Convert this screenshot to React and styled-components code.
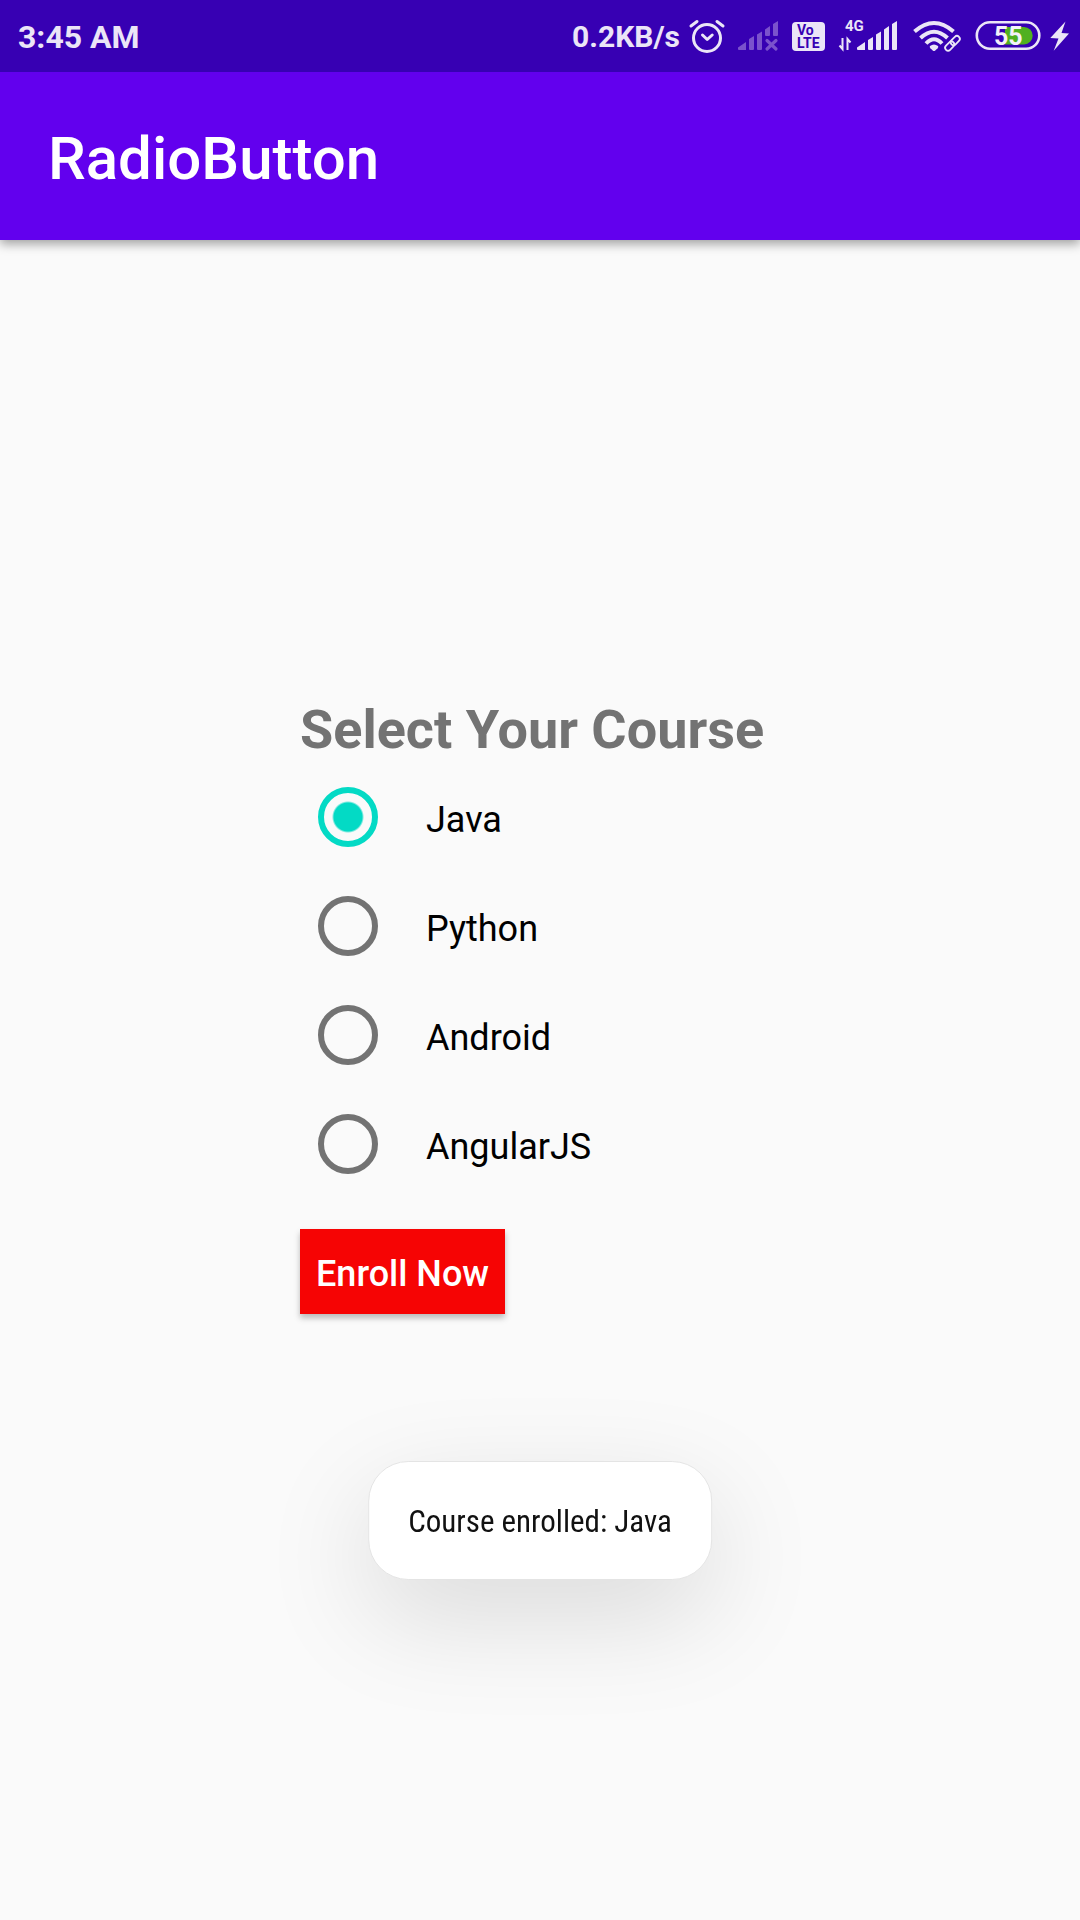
import React, { useState } from "react";
import styled, { createGlobalStyle } from "styled-components";

const GlobalStyle = createGlobalStyle`
  * { box-sizing: border-box; }
  body {
    margin: 0;
    background: #fafafa;
    font-family: Roboto, "Liberation Sans", sans-serif;
  }
`;

const Screen = styled.div`
  min-height: 100vh;
  display: flex;
  flex-direction: column;
`;

const StatusBar = styled.div`
  position: relative;
  z-index: 1;
  display: flex;
  align-items: center;
  justify-content: space-between;
  height: 72px;
  padding: 0 8px 0 18px;
  background: #3700b3;
  color: #ebe5f7;
`;

const Clock = styled.time`
  padding-top: 2px;
  font-size: 32px;
  line-height: 40px;
  font-weight: 700;
`;

const StatusItems = styled.div`
  display: flex;
  align-items: center;
`;

const Speed = styled.span`
  padding-top: 2px;
  font-size: 30px;
  line-height: 40px;
  font-weight: 700;
`;

const StatusIcons = styled.svg`
  display: block;
  width: 392px;
  height: 72px;
`;

const IconText = styled.text`
  fill: ${(p) => p.$color};
  font-size: ${(p) => p.$size}px;
  font-weight: 700;
`;

const AppBar = styled.header`
  display: flex;
  align-items: center;
  height: 168px;
  padding: 6px 48px 0;
  background: #6200ee;
  box-shadow: 0 4px 10px rgba(0, 0, 0, 0.36);
`;

const Title = styled.h1`
  margin: 0;
  color: #fff;
  font-size: 60px;
  line-height: 72px;
  font-weight: 500;
`;

const Main = styled.main`
  flex: 1;
  padding: 458px 24px 48px;
`;

const Form = styled.form`
  max-width: 480px;
  margin: 0 auto;
`;

const Group = styled.fieldset`
  margin: 0;
  padding: 0;
  border: 0;
`;

const Legend = styled.legend`
  padding: 0;
  color: #737373;
  font-size: 54px;
  line-height: 64px;
  font-weight: 700;
`;

const Option = styled.label`
  display: flex;
  align-items: center;
  gap: 48px;
  height: 109px;
  padding-left: 18px;
`;

const Radio = styled.input`
  appearance: none;
  flex: none;
  width: 60px;
  height: 60px;
  margin: 0;
  border: 6px solid #737373;
  border-radius: 50%;

  &:checked {
    border-color: #03dac5;
    background: radial-gradient(circle, #03dac5 14px, transparent 16px);
  }
`;

const OptionText = styled.span`
  padding-top: 6px;
  color: #000;
  font-size: 36px;
  line-height: 42px;
`;

const EnrollButton = styled.button`
  display: block;
  margin: 31px 0 0;
  padding: 24px 16px 19px;
  border: 0;
  background: #f60404;
  color: #fff;
  font-family: inherit;
  font-size: 36px;
  line-height: 42px;
  font-weight: 500;
  box-shadow: 0 4px 6px rgba(0, 0, 0, 0.26);
`;

const Toast = styled.div`
  position: fixed;
  bottom: 340px;
  left: 50%;
  transform: translateX(-50%);
  padding: 41px 39px 38px;
  border: 1px solid #e4e4e4;
  border-radius: 40px;
  background: #fff;
  color: #111;
  font-family: "Roboto Condensed", Roboto, sans-serif;
  font-size: 31px;
  line-height: 38px;
  white-space: nowrap;
  box-shadow: 0 36px 108px rgba(0, 0, 0, 0.13);
`;

const courses = ["Java", "Python", "Android", "AngularJS"];
const light = "#ebe5f7";
const dim = "#7b52cc";

function Indicators() {
  return (
    <StatusIcons viewBox="680 0 392 72" fill="none" aria-hidden="true">
      {/* alarm */}
      <g stroke={light} strokeWidth="3" strokeLinecap="round" strokeLinejoin="round">
        <circle cx="707" cy="38" r="13.5" />
        <path d="M702.5 35l4.7 4.5 5-4.5M691 26l6-4.500M723 26l-6-4.500" />
      </g>

      {/* first SIM, no service */}
      <path
        fill={dim}
        d="M738 47.500l8-5.500v8h-7q-1 0-1-1zM749 39l5-3v13q0 1-1 1h-3q-1 0-1-1zM757 34.500l5-3v17.500q0 1-1 1h-3q-1 0-1-1zM765 29.500l5-3.500v9q0 1-1 1h-3q-1 0-1-1zM773 24l5-3v14q0 1-1 1h-3q-1 0-1-1z"
      />
      <path stroke={dim} strokeWidth="3.2" strokeLinecap="round" d="M767 40.500l9 8.500M776 40.500l-9 8.500" />

      {/* VoLTE badge */}
      <rect x="792" y="22" width="33" height="29" rx="4" fill={light} />
      <IconText x="797" y="35" $size={14} $color="#3700b3">Vo</IconText>
      <IconText x="797" y="48" $size={14} $color="#3700b3">LTE</IconText>

      {/* second SIM */}
      <IconText x="845" y="31" $size={15} $color={light}>4G</IconText>
      <path stroke={light} strokeWidth="2" d="M842.500 38v11l-3-3.500M847.500 50V39l3 3.500" />
      <path
        fill={light}
        d="M857 47.500l8-5.500v8h-7q-1 0-1-1zM868 40l5-3v12q0 1-1 1h-3q-1 0-1-1zM876 34.500l5-3v17.500q0 1-1 1h-3q-1 0-1-1zM884 29.500l5-3.500v23q0 1-1 1h-3q-1 0-1-1zM892 24l5-3v28q0 1-1 1h-3q-1 0-1-1z"
      />

      {/* wifi with link */}
      <g stroke={light} strokeWidth="4">
        <path d="M914.500 31.500Q934 14.500 953.500 31.500" />
        <path d="M920.500 38Q934 25.500 947.500 38" />
        <path d="M926 43.500Q934 35 942 43.500" />
      </g>
      <path fill={light} d="M930 46q4-3 8 0 .8 1-.4 2.300l-2.600 2.400q-1 .8-2 0l-2.600-2.400q-1.200-1.300-.4-2.300z" />
      <g stroke={light} strokeWidth="1.8">
        <rect x="944.500" y="43.200" width="10.500" height="5.800" rx="2.900" transform="rotate(-45 949.700 46.100)" />
        <rect x="950" y="37.700" width="10.500" height="5.800" rx="2.900" transform="rotate(-45 955.200 40.600)" />
      </g>

      {/* battery */}
      <rect x="976.800" y="22.300" width="62.500" height="26.500" rx="13.200" stroke={light} strokeWidth="2.600" />
      <path fill="#50b020" d="M1005 27h19a8.700 8.700 0 0 1 0 17.400h-19z" />
      <IconText x="994" y="45" $size={25} $color="#f4f0fb">55</IconText>
      <path fill={light} d="M1065.500 21.500L1050.300 38l8.200.5-4.800 12.200L1069 33.500l-7.500-.5z" />
    </StatusIcons>
  );
}

export default function App() {
  const [course, setCourse] = useState("Java");
  return (
    <Screen>
      <GlobalStyle />
      <StatusBar>
        <Clock>3:45 AM</Clock>
        <StatusItems>
          <Speed>0.2KB/s</Speed>
          <Indicators />
        </StatusItems>
      </StatusBar>
      <AppBar>
        <Title>RadioButton</Title>
      </AppBar>
      <Main>
        <Form onSubmit={(e) => e.preventDefault()}>
          <Group>
            <Legend>Select Your Course</Legend>
            {courses.map((name) => (
              <Option key={name}>
                <Radio
                  type="radio"
                  name="course"
                  value={name}
                  checked={course === name}
                  onChange={() => setCourse(name)}
                />
                <OptionText>{name}</OptionText>
              </Option>
            ))}
          </Group>
          <EnrollButton type="submit">Enroll Now</EnrollButton>
        </Form>
      </Main>
      <Toast role="status">Course enrolled: Java</Toast>
    </Screen>
  );
}
